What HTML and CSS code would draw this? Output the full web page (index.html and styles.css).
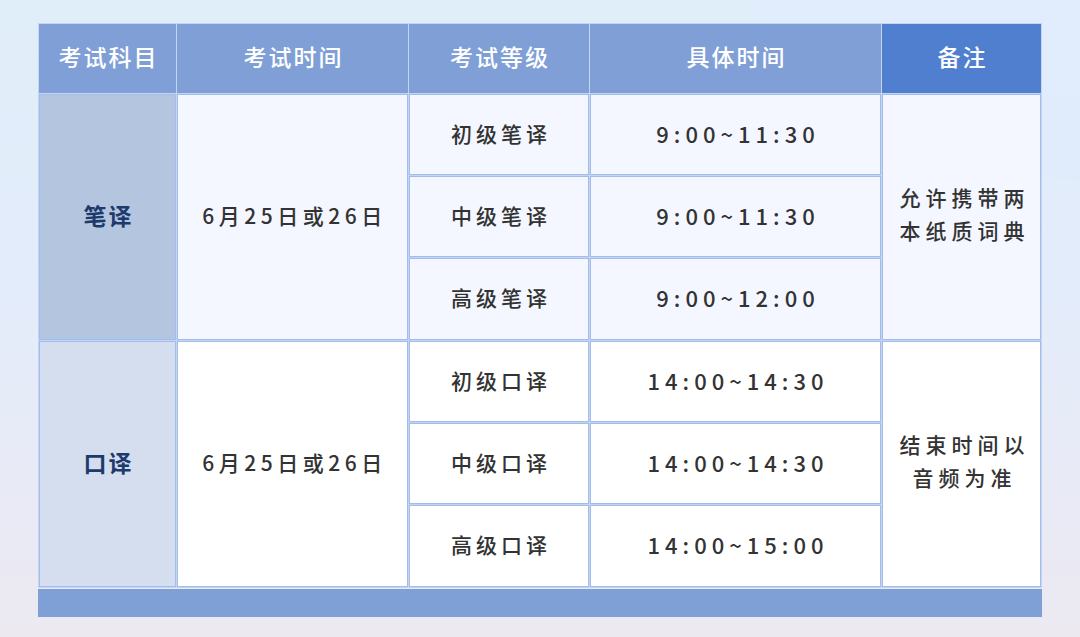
FILE: index.html
```html
<!DOCTYPE html>
<html lang="zh-CN">
<head>
<meta charset="utf-8">
<link rel="stylesheet" href="styles.css">
</head>
<body>
<div class="page">
  <div class="deco"></div>
  <div class="wrap">
    <table class="sched">
      <colgroup>
        <col class="c1"><col class="c2"><col class="c3"><col class="c4"><col class="c5">
      </colgroup>
      <thead>
        <tr>
          <th>考试科目</th>
          <th>考试时间</th>
          <th>考试等级</th>
          <th>具体时间</th>
          <th class="note-h">备注</th>
        </tr>
      </thead>
      <tbody class="g1">
        <tr>
          <td rowspan="3" class="subj subj1">笔译</td>
          <td rowspan="3" class="date">6月25日或26日</td>
          <td>初级笔译</td>
          <td class="time">9:00~11:30</td>
          <td rowspan="3" class="note">允许携带两<br>本纸质词典</td>
        </tr>
        <tr>
          <td>中级笔译</td>
          <td class="time">9:00~11:30</td>
        </tr>
        <tr class="last">
          <td>高级笔译</td>
          <td class="time">9:00~12:00</td>
        </tr>
      </tbody>
      <tbody class="g2">
        <tr>
          <td rowspan="3" class="subj subj2">口译</td>
          <td rowspan="3" class="date">6月25日或26日</td>
          <td>初级口译</td>
          <td class="time">14:00~14:30</td>
          <td rowspan="3" class="note">结束时间以<br>音频为准</td>
        </tr>
        <tr>
          <td>中级口译</td>
          <td class="time">14:00~14:30</td>
        </tr>
        <tr class="last">
          <td>高级口译</td>
          <td class="time">14:00~15:00</td>
        </tr>
      </tbody>
    </table>
    <div class="footbar"></div>
  </div>
</div>
</body>
</html>
```

FILE: styles.css
```css
* { box-sizing: border-box; }
html, body { margin: 0; padding: 0; }
body {
  width: 1080px;
  height: 637px;
  overflow: hidden;
  font-family: "Noto Sans CJK SC", "Noto Sans", sans-serif;
}
.page {
  position: relative;
  width: 1080px;
  height: 637px;
  background: linear-gradient(180deg, #e0eef9 0%, #e3ecfb 45%, #e8eaf6 75%, #ece9f1 100%);
  padding: 23px 38px 0 38px;
  overflow: hidden;
}
.deco {
  position: absolute;
  left: 700px;
  top: -520px;
  width: 760px;
  height: 700px;
  border-radius: 50%;
  background: linear-gradient(180deg, #e4f0fb 0%, #e0ecfc 100%);
}
.wrap {
  position: relative;
  width: 1004px;
}
.sched {
  table-layout: fixed;
  border-collapse: separate;
  border-spacing: 1px;
  background: #c3d5f3;
}
.c1 { width: 137px; }
.c2 { width: 231px; }
.c3 { width: 180px; }
.c4 { width: 291px; }
.c5 { width: 159px; }
th {
  height: 69px;
  background: #7f9fd6;
  border: 1px solid #7f9fd6;
  color: #ffffff;
  font-size: 23px;
  font-weight: 500;
  letter-spacing: 2px;
  text-align: center;
  padding: 0 0 6px 2px;
}
th.note-h {
  background: #517fd0;
  border-color: #517fd0;
}
td {
  height: 81px;
  border: 1px solid #a2bde9;
  text-align: center;
  vertical-align: middle;
  color: #333333;
  font-size: 21px;
  font-weight: 500;
  letter-spacing: 4px;
  padding: 0 0 4px 4px;
}
tr.last td { height: 82px; }
td.time {
  font-size: 22px;
  letter-spacing: 5px;
  padding-left: 5px;
}
td.date {
  letter-spacing: 4.5px;
}
.g1 td { background: #f4f7ff; }
.g2 td { background: #ffffff; }
td.subj {
  color: #1e3a6c;
  font-size: 23px;
  letter-spacing: 2px;
  font-weight: 600;
  padding-left: 2px;
}
.g1 td.subj1 { background: #b4c5e0; }
.g2 td.subj2 { background: #d4deee; }
td.note {
  font-size: 21px;
  letter-spacing: 5px;
  line-height: 33px;
  padding-left: 6px;
  padding-bottom: 6px;
}
.footbar {
  height: 28px;
  background: #7fa0d6;
  margin-top: 1px;
}
```
